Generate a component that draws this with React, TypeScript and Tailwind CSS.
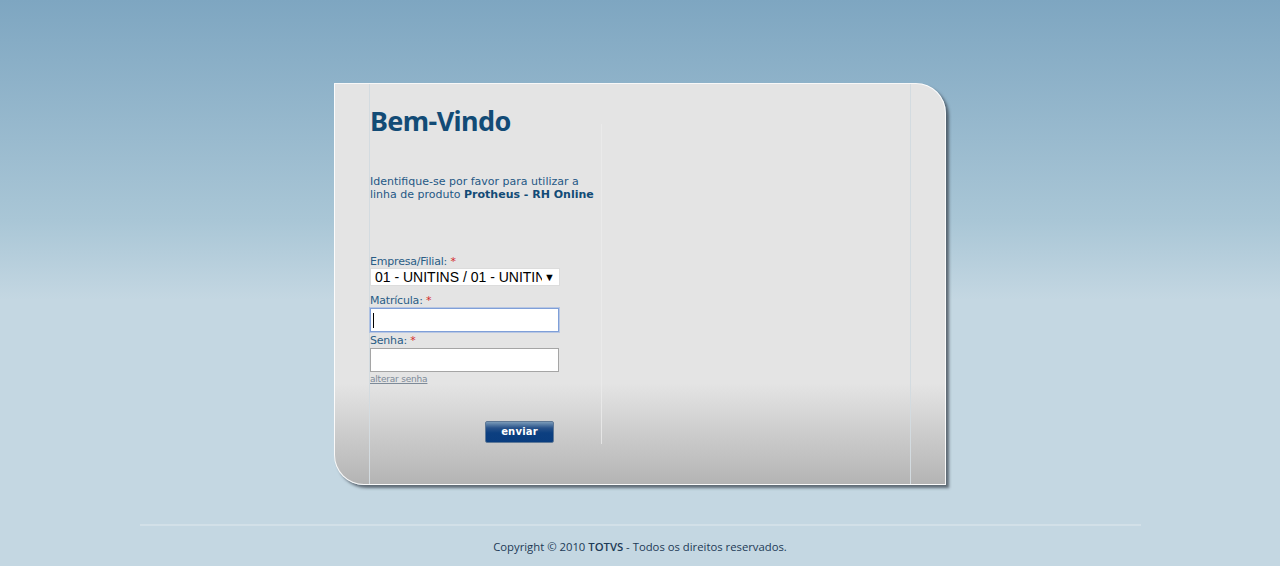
const verdana = "font-['DejaVu_Sans',Verdana,sans-serif]";

const Label = ({ text }: { text: string }) => (
  <div className={`${verdana} text-[11px] leading-[13px] text-[#2a5d86] tracking-[-0.2px]`}>
    {text} <span className="text-[#d42a2a]">*</span>
  </div>
);

export default function App() {
  return (
    <div className="min-h-[566px] w-full flex flex-col items-center bg-[linear-gradient(to_bottom,#7ea6c1_0px,#a9c6d6_220px,#c4d7e2_300px,#c4d7e2_100%)]">
      {/* cartao de login */}
      <div className="mt-[83px] w-[612px] h-[402px] flex rounded-tr-[30px] rounded-bl-[30px] border border-white/90 bg-[linear-gradient(to_bottom,#e4e4e4_0%,#e4e4e4_75%,#b4b4b4_100%)] shadow-[3px_3px_3px_rgba(60,70,80,0.75)]">
        <div className="ml-[34px] w-[542px] h-full flex border-l border-r border-[#d3dbe0]">
          <div className="w-[231px] flex flex-col">
            <h1 className="font-['Noto_Sans',sans-serif] mt-[18px] text-[27px] leading-[38px] font-bold text-[#124b76] tracking-[-0.6px]">
              Bem-Vindo
            </h1>
            <p className={`${verdana} mt-[35px] text-[11px] leading-[13px] text-[#1f5884]`}>
              Identifique-se por favor para utilizar a
              <br />
              linha de produto <b className="text-[#124b76]">Protheus - RH Online</b>
            </p>

            <div className="mt-[54px]">
              <Label text="Empresa/Filial:" />
              <div className="w-[190px] h-[18px] flex items-center bg-white border border-[#dcdcdc] font-['Liberation_Sans',Arial,sans-serif] text-[14px] text-black">
                <span className="pl-[4px] w-[171px] overflow-hidden whitespace-nowrap">01 - UNITINS / 01 - UNITINS</span>
                <span className="text-[11px] pl-[2px]">▼</span>
              </div>
            </div>

            <div className="mt-[8px]">
              <Label text="Matrícula:" />
              <div className="mt-[1px] w-[189px] h-[24px] bg-white border border-[#7f9fd8] shadow-[0_0_0_1px_rgba(140,170,225,0.5)] flex items-center pl-[2px]">
                <span className="w-[1px] h-[15px] bg-black" />
              </div>
            </div>

            <div className="mt-[2px]">
              <Label text="Senha:" />
              <div className="mt-[1px] w-[189px] h-[24px] bg-white border border-[#a5a5a5]" />
            </div>

            <a className={`${verdana} mt-[1px] text-[9px] leading-[12px] text-[#7d8a98] underline tracking-[-0.2px]`} href="#">
              alterar senha
            </a>

            <button className={`${verdana} mt-[36px] ml-[115px] w-[69px] h-[22px] rounded-[2px] border border-[#5e7896] bg-[linear-gradient(to_bottom,#7a9ab8_0%,#28528a_30%,#0c3f80_55%,#0a3d7f_100%)] text-white text-[10px] font-bold leading-[20px] tracking-[0.2px]`}>
              enviar
            </button>
          </div>
          <div className="mt-[40px] h-[320px] border-l border-[#ebebeb]/80" />
        </div>
      </div>

      {/* rodape */}
      <div className="mt-[39px] w-[1001px] border-t-2 border-[#d2e0e8]" />
      <div className="mt-[13px] font-['Open_Sans',sans-serif] text-[11.3px] text-[#1d3a56]">
        Copyright © 2010 <b className="font-semibold">TOTVS</b> - Todos os direitos reservados.
      </div>
    </div>
  );
}
